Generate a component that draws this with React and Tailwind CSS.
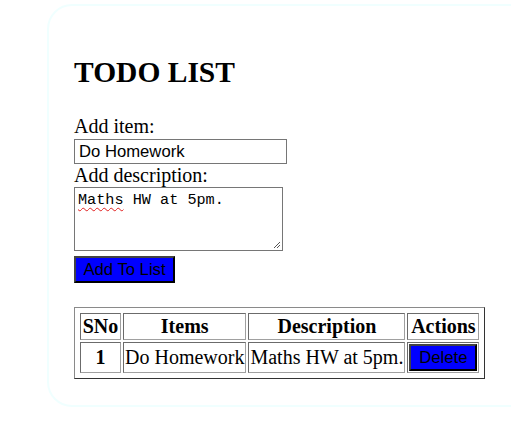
export default function App() {
  const serif = "font-['Liberation_Serif','Times_New_Roman',serif]";
  const sans = "font-['Liberation_Sans',Arial,sans-serif]";
  const cell =
    "border border-t-[#6b6b6b] border-l-[#6b6b6b] border-b-[#a0a0a0] border-r-[#a0a0a0] px-[1px] py-[1px] text-center";
  return (
    <div className={`w-full h-[448px] overflow-hidden bg-white text-black ${serif}`}>
      <div className="ml-[47px] mt-[4px] w-[520px] border-2 border-[#f0ffff] rounded-[25px] px-[25px] pt-[25px] pb-[26px]">
        <h1 className="mt-[23px] text-[29.5px] leading-[37px] font-bold">TODO LIST</h1>
        <div className="mt-[24px] text-[20px] leading-[23px] h-[23px]">Add item:</div>
        <div
          className={`mt-[1px] w-[213px] h-[25px] border border-[#767676] pl-[4px] text-[16.67px] leading-[23px] ${sans}`}
        >
          Do Homework
        </div>
        <div className="text-[20px] leading-[23px] h-[23px]">Add description:</div>
        <div className="relative w-[209px] h-[64px] border border-[#767676] pl-[3px] pt-[3px] font-['Liberation_Mono',monospace] text-[15.2px] leading-[18px]">
          <span className="underline decoration-wavy decoration-[#e02020] decoration-1 underline-offset-[3px]">Maths</span>
          {" HW at 5pm."}
          <svg className="absolute right-[1px] bottom-[1px]" width="9" height="9" viewBox="0 0 9 9">
            <line x1="8" y1="2" x2="2" y2="8" stroke="#555" strokeWidth="1" />
            <line x1="8" y1="5" x2="5" y2="8" stroke="#555" strokeWidth="1" />
          </svg>
        </div>
        <div
          className={`mt-[5px] w-[101px] h-[27px] bg-[#0000ff] border-2 border-t-[#444] border-l-[#444] border-b-black border-r-black flex items-center justify-center text-[16.67px] leading-[19px] ${sans}`}
        >
          Add To List
        </div>
        <table className="mt-[24px] border-separate border-spacing-[2px] border border-t-[#8a8a8a] border-l-[#8a8a8a] border-b-[#333] border-r-[#333] p-[3px] text-[20px] leading-[23px]">
          <thead>
            <tr>
              <th className={`${cell} font-bold h-[27px] w-[41px]`}>SNo</th>
              <th className={`${cell} font-bold`}>Items</th>
              <th className={`${cell} font-bold`}>Description</th>
              <th className={`${cell} font-bold`}>Actions</th>
            </tr>
          </thead>
          <tbody>
            <tr>
              <td className={`${cell} font-bold`}>1</td>
              <td className={cell}>Do Homework</td>
              <td className={cell}>Maths HW at 5pm.</td>
              <td className={cell}>
                <div
                  className={`w-[68px] h-[27px] bg-[#0000ff] border-2 border-t-[#444] border-l-[#444] border-b-black border-r-black flex items-center justify-center text-[16.67px] leading-[19px] ${sans}`}
                >
                  Delete
                </div>
              </td>
            </tr>
          </tbody>
        </table>
      </div>
    </div>
  );
}
